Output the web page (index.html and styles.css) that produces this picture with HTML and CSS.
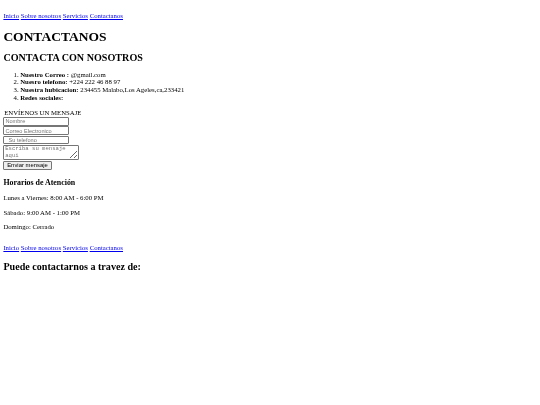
FILE: index.html
```html
<!DOCTYPE html>
<html lang="es">
<head>
<meta charset="utf-8">
<title>Contactanos</title>
<link rel="stylesheet" href="styles.css">
</head>
<body class="page">
<header class="header">
<nav class="nav">
<a class="nav-link" href="#">Inicio</a>
<a class="nav-link" href="#">Sobre nosotros</a>
<a class="nav-link" href="#">Servicios</a>
<a class="nav-link" href="#">Contactanos</a>
</nav>
</header>
<h1 class="title">CONTACTANOS</h1>
<h2 class="subtitle">CONTACTA CON NOSOTROS</h2>
<ol class="info">
<li><b>Nuestro Correo :</b> @gmail.com</li>
<li><b>Nuesro telefono:</b> +224 222 46 88 97</li>
<li><b>Nuestra hubicacion:</b> 234455 Malabo,Los Ageles,ca,233421</li>
<li><b>Redes sociales:</b></li>
</ol>
<form class="form">
<div class="form-label">ENVÍENOS UN MENSAJE</div>
<input class="field" type="text" placeholder="Nombre">
<input class="field" type="email" placeholder="Correo Electronico">
<input class="field" type="tel" placeholder="  Su telefono">
<textarea class="message" placeholder="Escriba su mensaje aqui"></textarea>
<button class="send" type="button">Enviar mensaje</button>
</form>
<h3 class="hours-title">Horarios de Atención</h3>
<p class="text">Lunes a Viernes: 8:00 AM - 6:00 PM</p>
<p class="text">Sábado: 9:00 AM - 1:00 PM</p>
<p class="text">Domingo: Cerrado</p>
<footer class="footer">
<nav class="nav">
<a class="nav-link" href="#">Inicio</a>
<a class="nav-link" href="#">Sobre nosotros</a>
<a class="nav-link" href="#">Servicios</a>
<a class="nav-link" href="#">Contactanos</a>
</nav>
<h2 class="subtitle footer-title">Puede contactarnos a travez de:</h2>
</footer>
</body>
</html>
```
FILE: styles.css
```css
html { background: #fff; }
.page {
  margin: 3.375px;
  font-family: "Liberation Serif", "Times New Roman", serif;
  font-size: 6.75px;
  line-height: 1.15;
  color: #000;
}
.header { margin: 0; }
.nav { margin: 8.5px 0 6.75px; }
.footer .nav { margin: 12.5px 0 6.75px; }
.nav-link { color: #0000ee; text-decoration: underline; }
.title { font-size: 13.5px; margin: 9.05px 0 8px; font-weight: bold; }
.subtitle { font-size: 10.125px; margin: 8px 0 6.8px; font-weight: bold; }
.footer-title { margin: 9.6px 0 8.4px; }
.info { margin: 6.75px 0 7.8px; padding-left: 16.875px; }
.form { margin: 0; }
.form-label { padding-left: 0.8px; }
.field {
  display: block;
  width: 66px;
  height: 8.4px;
  box-sizing: border-box;
  margin: 0 0 0.9px;
  padding: 0 1px;
  border: 1px solid #767676;
  border-radius: 1px;
  font-family: "Liberation Sans", Arial, sans-serif;
  font-size: 5.6px;
  line-height: 1;
  background: #fff;
}
.field::placeholder { color: #757575; white-space: pre; }
.message::placeholder { color: #757575; }
.message {
  display: block;
  width: 76px;
  height: 15px;
  box-sizing: border-box;
  margin: 0 0 1.4px;
  padding: 0.4px 0.8px;
  border: 1px solid #767676;
  border-radius: 1px;
  font-family: "Liberation Mono", monospace;
  font-size: 5.6px;
  line-height: 1.15;
}
.send {
  display: block;
  margin: 0;
  height: 8.6px;
  box-sizing: border-box;
  padding: 0 2.8px;
  font-family: "Liberation Sans", Arial, sans-serif;
  font-size: 5.9px;
  line-height: 1;
  color: #000;
  border: 1px solid #767676;
  border-radius: 1px;
  background: #efefef;
}
.hours-title { font-size: 7.9px; margin: 7.9px 0 7.4px; font-weight: bold; }
.text { margin: 6.75px 0; }
.footer { margin: 0; }
```
